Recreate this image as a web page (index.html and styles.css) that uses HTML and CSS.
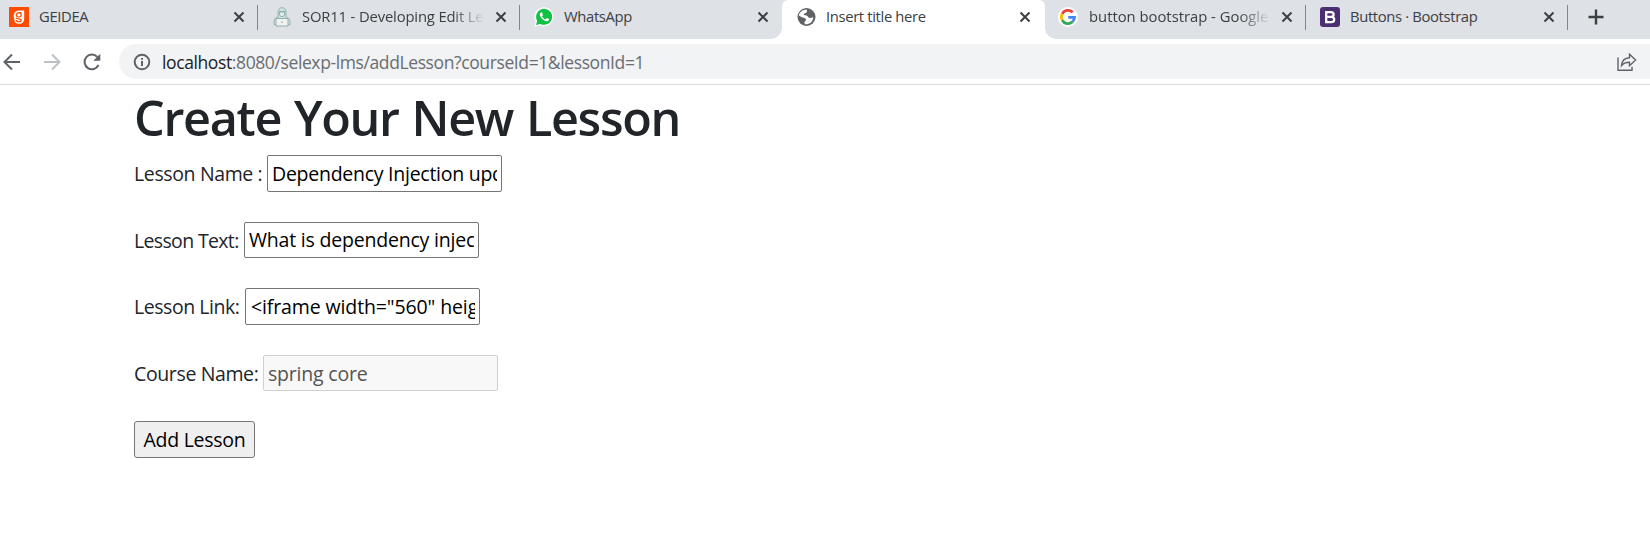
FILE: index.html
```html
<!DOCTYPE html>
<html lang="en">
<head>
<meta charset="utf-8">
<title>Insert title here</title>
<link rel="stylesheet" href="styles.css">
</head>
<body>
<header class="browser">
  <div class="tabstrip">
    <div class="tab tab-first">
      <svg class="favicon" viewBox="0 0 20 20"><path fill="#ff4b00" d="M0 0h20v20H0z"/><path d="M4.700 9.500c0-4 2.300-6 6-6h4.500v7.700c0 3.600-1.900 5.600-5.100 5.600-2.700 0-4.600-1.200-4.600-3" fill="#fff"/><path d="M12.300 5.700H9.800c-3.300 0-3.300 4.300 0 4.300s3.300-4.300 0-4.300M7.500 10.500c-1.300 2 5.500.7 4.700 2.700-.7 2.200-5 1.800-4.900-.2" fill="none" stroke="#ff4b00" stroke-width="1.200"/></svg>
      <span class="title">GEIDEA</span>
      <svg class="close" viewBox="0 0 12 12"><path d="M1.500 1.500l9 9m0-9l-9 9"/></svg>
    </div>
    <div class="tab">
      <svg class="favicon" viewBox="0 0 20 20" fill="none" stroke="#8fb0b0"><path d="M6 11.500V5a4 4.300 0 0 1 8 0v6.500" fill="#d5e0e1"/><path d="M5 10.500c-1.800.5-2.700 1.500-2.900 4v3.200h2m11-7.200c1.800.5 2.700 1.500 2.900 4v3.200h-2" fill="#dce5e5"/><path d="M7.500 5h5v2.200a2.500 2.500 0 0 1-5 0zM7 4.500h6" fill="#e9eeee"/><path d="M4 11.500h12v7.500H4z" fill="#f1f3ef"/><path d="M9.500 15.200h1" stroke="#5f9292" stroke-width="1.500"/></svg>
      <span class="title fade sor">SOR11 - Developing Edit Le</span>
      <svg class="close" viewBox="0 0 12 12"><path d="M1.500 1.500l9 9m0-9l-9 9"/></svg>
    </div>
    <div class="tab no-line">
      <svg class="favicon" viewBox="0 0 20 20"><path fill="#fff" d="M.3 19.700l1.400-5A9.500 9.500 0 1 1 5.900 18.400z"/><path fill="#10c143" d="M2 18l1.200-4.100A8 8 0 1 1 6.300 16.900z"/><path fill="#fff" d="M7.300 5.200c-2 .8-2 3.100-.3 5.300 2 2.700 4.600 4.200 6.500 3.700 1.300-.4 1.800-1.600 1.500-2.200l-2.200-1-1.300 1.400c-1.600-.6-2.700-1.700-3.400-3l.9-1.400-1-2.600z"/></svg>
      <span class="title">WhatsApp</span>
      <svg class="close" viewBox="0 0 12 12"><path d="M1.500 1.500l9 9m0-9l-9 9"/></svg>
    </div>
    <div class="tab active">
      <svg class="favicon" viewBox="0 0 20 20"><circle cx="10.500" cy="10" r="9" fill="#5f6368"/><path fill="#fff" d="M11 2.800c-4-.7-7.500 2-8.200 5.700l3.200 1.700c2.600.6 4 .9 4 2.700 0 1-1.300 1.200-1.500 2.200-.2.900.2 1.700.5 2.100 4.300.5 8-2.500 8.200-6.500-1.200-.7-2.200.3-3.400.2-1.700 0-1.800-2.200-3.400-2.500-1-.2-2.400 0-2.700-.8-.2-1.300 1.800-1.300 2.600-1.900.8-.7.700-1.900.7-2.900z"/></svg>
      <span class="title">Insert title here</span>
      <svg class="close" viewBox="0 0 12 12"><path d="M1.500 1.500l9 9m0-9l-9 9"/></svg>
    </div>
    <div class="tab">
      <svg class="favicon" viewBox="0 0 20 20"><circle cx="10" cy="10" r="10" fill="#fff"/><g fill="none" stroke-width="2.800"><path stroke="#ea4335" d="M14.700 5.300A6.600 6.600 0 0 0 4.200 6.800"/><path stroke="#fbbc05" d="M4.200 6.800a6.600 6.600 0 0 0 0 6.400"/><path stroke="#34a853" d="M4.200 13.200a6.600 6.600 0 0 0 10.200 1.700"/><path stroke="#4285f4" d="M14.400 14.900a6.400 6.400 0 0 0 2.100-4.600H10.200"/></g></svg>
      <span class="title fade google">button bootstrap - Google</span>
      <svg class="close" viewBox="0 0 12 12"><path d="M1.500 1.500l9 9m0-9l-9 9"/></svg>
    </div>
    <div class="tab">
      <svg class="favicon" viewBox="0 0 20 20"><rect width="20" height="20" rx="3" fill="#4b2f70"/><path fill="none" stroke="#fff" stroke-width="2.300" d="M6.200 5.100h4.700c3.600 0 3.600 4.700 0 4.700H6.200h5c4 0 4 5.300 0 5.300H6.200V4"/></svg>
      <span class="title">Buttons · Bootstrap</span>
      <svg class="close" viewBox="0 0 12 12"><path d="M1.500 1.500l9 9m0-9l-9 9"/></svg>
    </div>
    <svg class="plus" viewBox="0 0 16 16"><path d="M8 .5v15M.5 8h15"/></svg>
  </div>
  <div class="toolbar">
    <svg class="nav" viewBox="0 0 18 18"><path d="M17 9H2M9 1.500L1.500 9 9 16.500"/></svg>
    <svg class="nav forward" viewBox="0 0 18 18"><path d="M1 9h15M9 1.500L16.500 9 9 16.500"/></svg>
    <svg class="nav" viewBox="0 0 18 18"><path d="M15.500 12A7.300 7.300 0 1 1 14.300 4"/><path class="solid" d="M17.300.8v7h-7z"/></svg>
    <div class="omnibox">
      <svg class="info" viewBox="0 0 18 18"><circle cx="9" cy="9" r="7.300"/><path d="M9 8v5M9 4.900v1.900"/></svg>
      <span class="url"><span class="host">localhost</span>:8080/selexp-lms/addLesson?courseId=1&amp;lessonId=1</span>
      <svg class="share" viewBox="0 0 20 18"><path d="M1 4.500v12.700h14v-3.500M4.500 12.500c.4-5 3.300-7.500 8-7.800V1.200L18.600 7l-6.100 5.700V9.200c-3.700-.1-6 .8-8 3.300z"/></svg>
    </div>
  </div>
</header>
<main class="page">
  <h1 class="heading">Create Your New Lesson</h1>
  <form class="form">
    <div class="row"><label class="label name">Lesson Name :</label><input class="field field-name" value="Dependency Injection updated"></div>
    <div class="row"><label class="label text">Lesson Text:</label><input class="field field-text" value="What is dependency injection"></div>
    <div class="row"><label class="label link">Lesson Link:</label><input class="field field-link" value="&lt;iframe width=&quot;560&quot; height=&quot;315&quot;"></div>
    <div class="row"><label class="label course">Course Name:</label><input class="field" value="spring core" disabled></div>
    <div class="row row-last"><button class="submit" type="button">Add Lesson</button></div>
  </form>
</main>
</body>
</html>
```
FILE: styles.css
```css
* { box-sizing: border-box; }
body {
  margin: 0;
  background: #fff;
  color: #212529;
  font: 19.500px/30px "Open Sans", "Noto Sans", sans-serif;
}
svg { display: block; flex: none; }
.browser { border-bottom: 1px solid #dadce0; }
.tabstrip {
  display: flex;
  height: 39px;
  background: #dee1e6;
}
.tab {
  display: flex;
  position: relative;
  flex: none;
  width: 262px;
  height: 39px;
  padding: 7px 13.500px 0 14px;
}
.tab-first { width: 258px; padding-left: 9px; }
.tab:not(.active):not(.no-line)::after {
  content: "";
  position: absolute;
  right: 0;
  top: 5px;
  width: 1px;
  height: 25px;
  background: #80868b;
}
.favicon { width: 20px; height: 20px; }
.title {
  flex: 1;
  margin: -1px 0 0 10px;
  height: 21px;
  overflow: hidden;
  white-space: nowrap;
  color: #3c4043;
  font-size: 14.800px;
  line-height: 21px;
  letter-spacing: -0.350px;
}
.sor { letter-spacing: -0.150px; }
.google { margin-left: 11px; letter-spacing: 0; }
.fade {
  -webkit-mask-image: linear-gradient(to right, #000 82%, transparent);
  mask-image: linear-gradient(to right, #000 82%, transparent);
}
.close { width: 12px; height: 12px; margin: 4px 0 0 10px; }
.close path { stroke: #3c4043; stroke-width: 2; }
.active {
  width: 263px;
  margin-right: -1px;
  padding-right: 14px;
  background: #fff;
  border-radius: 6px 6px 0 0;
  z-index: 1;
}
/* Curved feet where the active tab meets the toolbar */
.active::before,
.active::after {
  content: "";
  position: absolute;
  bottom: 0;
  width: 11px;
  height: 11px;
}
.active::before { right: 100%; background: radial-gradient(circle at 0 0, transparent 10.500px, #fff 11px); }
.active::after { left: 100%; background: radial-gradient(circle at 100% 0, transparent 10.500px, #fff 11px); }
.plus { width: 16px; height: 16px; margin: 9px 0 0 19.500px; }
.plus path { stroke: #3c4043; stroke-width: 2.400; }
.toolbar { display: flex; align-items: center; height: 45px; padding-left: 3px; }
.nav { width: 18px; height: 18px; margin-right: 22px; fill: none; stroke: #5f6368; stroke-width: 2; }
.forward { stroke: #bdc1c6; }
.nav .solid { fill: #5f6368; stroke: none; }
.omnibox {
  display: flex;
  align-items: center;
  flex: 1;
  height: 35px;
  margin-left: -4px;
  padding: 0 13px 0 14px;
  border-radius: 18px 0 0 18px;
  background: #f1f3f4;
}
.info { width: 18px; height: 18px; fill: none; stroke: #5f6368; stroke-width: 2; }
.url {
  flex: 1;
  margin: 0 0 0 11px;
  color: #6a6d71;
  font-size: 17.500px;
  letter-spacing: -0.390px;
  white-space: nowrap;
}
.host { color: #202124; }
.share { width: 20px; height: 18px; fill: none; stroke: #5f6368; stroke-width: 1.400; }
.page { padding: 2px 0 0 134px; }
.heading {
  margin: 0 0 8px;
  font-size: 48.500px;
  line-height: 60px;
  font-weight: 600;
  letter-spacing: -1.300px;
  word-spacing: 1.500px;
}
.row { display: flex; height: 66.600px; }
.row-last { height: 37px; }
.label {
  height: 37px;
  line-height: 37px;
  letter-spacing: -0.370px;
  white-space: nowrap;
}
.name { width: 133px; }
.text { width: 110px; letter-spacing: -0.650px; }
.link { width: 111px; letter-spacing: -0.450px; }
.course { width: 129px; }
.field {
  width: 235px;
  height: 36.600px;
  padding: 0 4px;
  border: 1px solid #767676;
  border-radius: 2px;
  background: #fff;
  color: #000;
  font: inherit;
  letter-spacing: -0.200px;
}
.field-name { letter-spacing: -0.260px; }
.field-link { padding-left: 5px; letter-spacing: -0.120px; }
.field:disabled { border-color: #cfcfcf; background: #f8f8f8; color: #545454; }
.submit {
  width: 121px;
  height: 37px;
  padding: 0;
  border: 1px solid #767676;
  border-radius: 3px;
  background: #efefef;
  color: #000;
  font: inherit;
  letter-spacing: -0.280px;
}
```
